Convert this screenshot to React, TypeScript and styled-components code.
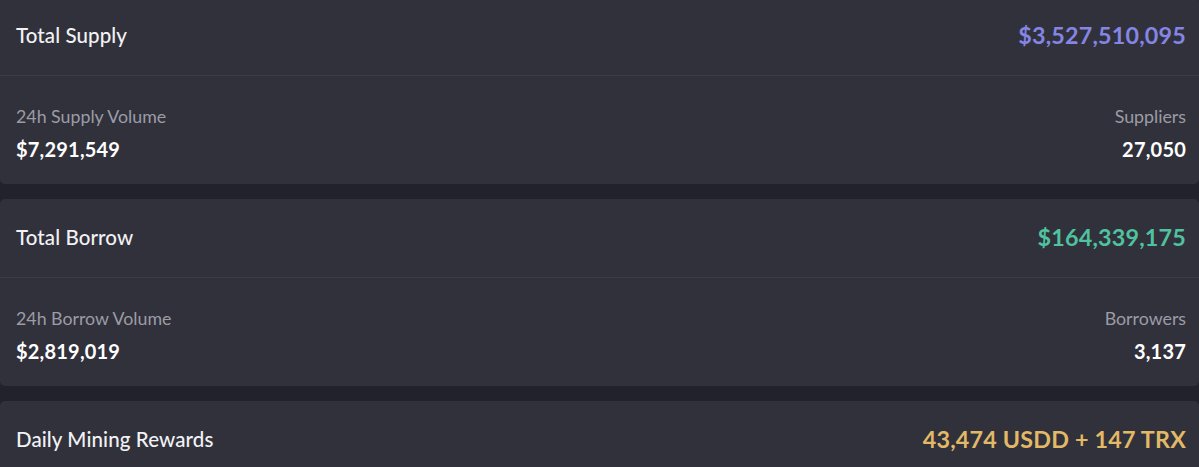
import React from "react";
import styled, { createGlobalStyle } from "styled-components";

const Global = createGlobalStyle`
  html, body { margin: 0; padding: 0; background: #22222c; }
  body { font-family: Lato, "Noto Sans", sans-serif; -webkit-font-smoothing: antialiased; }
`;

const Page = styled.div`
  display: flex;
  flex-direction: column;
  gap: 15px;
  margin-top: -3px;
  width: 1199px;
`;

const Card = styled.section`
  background: #31313b;
  border-radius: 5px;
  display: flex;
  flex-direction: column;
`;

const Header = styled.div`
  height: 79px;
  box-sizing: border-box;
  display: flex;
  align-items: center;
  justify-content: space-between;
  padding: 0 13px 2px 16px;
  border-bottom: 1px solid #3c3c47;
`;

const Title = styled.div`
  color: #f2f2f5;
  font-size: 20.5px;
  font-weight: 500;
  letter-spacing: 0.1px;
`;

const Amount = styled.div<{ $color: string }>`
  color: ${(p) => p.$color};
  font-size: 23.3px;
  font-weight: 700;
  letter-spacing: 0.2px;
`;

const Body = styled.div`
  height: 108px;
  box-sizing: border-box;
  padding: 30px 13px 0 16px;
  display: flex;
  justify-content: space-between;
`;

const Stat = styled.div<{ $right?: boolean }>`
  display: flex;
  flex-direction: column;
  gap: 11px;
  align-items: ${(p) => (p.$right ? "flex-end" : "flex-start")};
`;

const Label = styled.div`
  color: #9c9ca6;
  font-size: 17.8px;
  line-height: 20px;
`;

const Value = styled.div`
  color: #ffffff;
  font-size: 20px;
  line-height: 24px;
  font-weight: 700;
  letter-spacing: 0.2px;
`;

type Row = {
  title: string;
  amount: string;
  color: string;
  left?: [string, string];
  right?: [string, string];
};

const rows: Row[] = [
  {
    title: "Total Supply",
    amount: "$3,527,510,095",
    color: "#8585e4",
    left: ["24h Supply Volume", "$7,291,549"],
    right: ["Suppliers", "27,050"],
  },
  {
    title: "Total Borrow",
    amount: "$164,339,175",
    color: "#4fc29f",
    left: ["24h Borrow Volume", "$2,819,019"],
    right: ["Borrowers", "3,137"],
  },
  {
    title: "Daily Mining Rewards",
    amount: "43,474 USDD + 147 TRX",
    color: "#e2b967",
  },
];

export default function App() {
  return (
    <>
      <Global />
      <Page>
        {rows.map((r) => (
          <Card key={r.title}>
            <Header>
              <Title>{r.title}</Title>
              <Amount $color={r.color}>{r.amount}</Amount>
            </Header>
            {r.left && r.right && (
              <Body>
                <Stat>
                  <Label>{r.left[0]}</Label>
                  <Value>{r.left[1]}</Value>
                </Stat>
                <Stat $right>
                  <Label>{r.right[0]}</Label>
                  <Value>{r.right[1]}</Value>
                </Stat>
              </Body>
            )}
          </Card>
        ))}
      </Page>
    </>
  );
}
